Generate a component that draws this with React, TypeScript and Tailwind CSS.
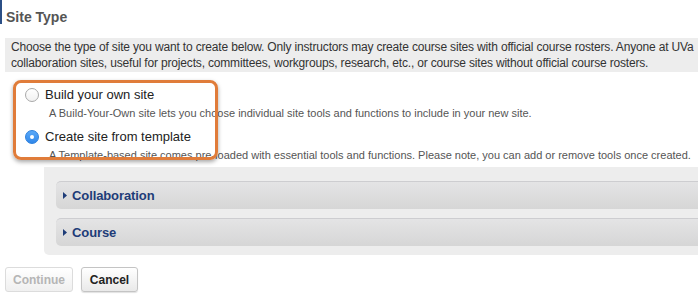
import { useState } from 'react';

const font = { fontFamily: '"Liberation Sans", Arial, Helvetica, sans-serif' };

function Radio({ checked }: { checked: boolean }) {
  return checked ? (
    <span className="w-[14px] h-[14px] rounded-full bg-gradient-to-b from-[#5aa9f8] to-[#2f87ea] border border-[#2c7fdc] flex items-center justify-center shrink-0">
      <span className="w-[4px] h-[4px] rounded-full bg-white" />
    </span>
  ) : (
    <span className="w-[14px] h-[14px] rounded-full bg-gradient-to-b from-white to-[#f1f1f1] border border-[#a9a9a9] shrink-0" />
  );
}

function Caret() {
  return (
    <svg width="4" height="7" viewBox="0 0 4 7" className="shrink-0">
      <path d="M0 0 L4 3.5 L0 7 Z" fill="#1e3c78" />
    </svg>
  );
}

function Section({ label }: { label: string }) {
  return (
    <div className="h-[28px] flex items-center gap-[5px] pl-[7px] rounded-l-[5px] border-t border-[#cdcdd0] bg-gradient-to-b from-[#e4e4e5] to-[#d6d6d6]">
      <Caret />
      <span className="text-[13px] font-bold text-[#1e3c78] tracking-[-0.1px]">{label}</span>
    </div>
  );
}

export default function App() {
  const [choice, setChoice] = useState<'own' | 'template'>('template');

  return (
    <div className="relative w-[698px] h-[300px] overflow-hidden bg-white text-[#333]" style={font}>
      {/* Title */}
      <div className="h-[24px] border-l-2 border-[#2b4f86] flex items-end pl-[4px]">
        <h1 className="text-[14px] font-bold text-[#555] leading-[18px] -mb-[2px]">Site Type</h1>
      </div>

      {/* Instructions */}
      <div className="mt-[14px] ml-[5px] h-[34px] bg-[#ededed] px-[6px] pt-[1px] text-[12px] leading-[16px] tracking-[-0.17px] text-[#333] whitespace-nowrap overflow-hidden">
        <p>Choose the type of site you want to create below. Only instructors may create course sites with official course rosters. Anyone at UVa</p>
        <p>collaboration sites, useful for projects, committees, workgroups, research, etc., or course sites without official course rosters.</p>
      </div>

      {/* Options */}
      <div className="mt-[15px] flex flex-col">
        <label className="flex items-center h-[16px] pl-[25px] gap-[6px] cursor-pointer" onClick={() => setChoice('own')}>
          <Radio checked={choice === 'own'} />
          <span className="text-[13px] text-[#222]">Build your own site</span>
        </label>
        <p className="mt-[3px] pl-[49px] h-[14px] text-[11px] leading-[14px] text-[#555] whitespace-nowrap">
          A Build-Your-Own site lets you choose individual site tools and functions to include in your new site.
        </p>
        <label className="mt-[9px] flex items-center h-[16px] pl-[25px] gap-[6px] cursor-pointer" onClick={() => setChoice('template')}>
          <Radio checked={choice === 'template'} />
          <span className="text-[13px] text-[#222]">Create site from template</span>
        </label>
        <p className="mt-[3px] pl-[49px] h-[14px] text-[11px] leading-[14px] text-[#555] whitespace-nowrap">
          A Template-based site comes pre-loaded with essential tools and functions. Please note, you can add or remove tools once created.
        </p>
      </div>

      {/* Template sections */}
      <div className="mt-[5px] ml-[44px] bg-[#ededed] rounded-bl-[5px] pt-[14px] pb-[9px] pl-[12px] flex flex-col gap-[9px]">
        <Section label="Collaboration" />
        <Section label="Course" />
      </div>

      {/* Buttons */}
      <div className="mt-[12px] ml-[5px] flex gap-[8px]">
        <button disabled className="h-[25px] w-[68px] rounded-[3px] border border-[#dcdcdc] bg-gradient-to-b from-white to-[#f0f0f0] text-[12px] font-bold text-[#b5b5b5]">
          Continue
        </button>
        <button className="h-[25px] w-[57px] rounded-[3px] border border-[#c4c4c4] bg-gradient-to-b from-white to-[#e9e9e9] text-[12px] font-bold text-[#222] shadow-[0_1px_1px_rgba(0,0,0,0.12)]">
          Cancel
        </button>
      </div>

      {/* Highlight annotation */}
      <div className="absolute left-[13px] top-[80px] w-[205px] h-[80px] rounded-[8px] border-[3px] border-[#e07c3a] shadow-[0_2px_4px_rgba(0,0,0,0.35)] pointer-events-none" />
    </div>
  );
}
